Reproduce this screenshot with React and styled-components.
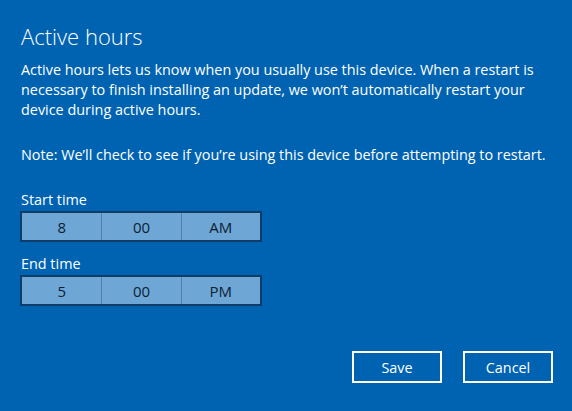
import React from 'react';
import styled, { createGlobalStyle } from 'styled-components';

const GlobalStyle = createGlobalStyle`
  html, body {
    margin: 0;
    padding: 0;
    background: #0063b1;
  }
  body {
    font-family: 'Open Sans', 'Noto Sans', sans-serif;
    color: #ffffff;
  }
`

function TimePicker({ hour, minute, period }) {
  return (
    <Picker>
      <Cell>{hour}</Cell>
      <Cell>{minute}</Cell>
      <Cell>{period}</Cell>
    </Picker>
  )
}

export default function App() {
  return (
    <>
      <GlobalStyle />
      <Dialog>
        <Title>Active hours</Title>
        <Text>
          Active hours lets us know when you usually use this device. When a restart is<br />
          necessary to finish installing an update, we won’t automatically restart your<br />
          device during active hours.
        </Text>
        <Note>Note: We’ll check to see if you’re using this device before attempting to restart.</Note>
        <Field>
          <Label>Start time</Label>
          <TimePicker hour="8" minute="00" period="AM" />
        </Field>
        <Field>
          <Label>End time</Label>
          <TimePicker hour="5" minute="00" period="PM" />
        </Field>
        <Actions>
          <Button>Save</Button>
          <Button>Cancel</Button>
        </Actions>
      </Dialog>
    </>
  )
}

const Dialog = styled.div`
  display: flex;
  flex-direction: column;
  width: 572px;
  height: 411px;
  box-sizing: border-box;
  padding: 22px 10px 0 21px;
  background: #0063b1;
`
const Title = styled.h1`
  margin: 0;
  font-size: 22px;
  font-weight: 300;
  line-height: 28px;
`
const Text = styled.p`
  margin: 10px 0 0 0;
  font-size: 14.4px;
  line-height: 20px;
  white-space: nowrap;
`
const Note = styled(Text)`
  margin-top: 25px;
`
const Field = styled.div`
  display: flex;
  flex-direction: column;
  margin-top: 25px;
  & + & {
    margin-top: 12px;
  }
`
const Label = styled.div`
  font-size: 14.4px;
  line-height: 20px;
  margin-bottom: 1px;
`
const Picker = styled.div`
  display: grid;
  grid-template-columns: 1fr 1fr 1fr;
  width: 242px;
  height: 31px;
  box-sizing: border-box;
  margin-left: -1px;
  border: 2px solid #103d68;
  background: #6ea6d6;
`
const Cell = styled.div`
  display: flex;
  align-items: center;
  justify-content: center;
  color: #0b1f33;
  font-size: 15px;
  & + & {
    border-left: 1px solid #4d82b2;
  }
`
const Actions = styled.div`
  display: flex;
  justify-content: flex-end;
  gap: 21px;
  margin-top: 45px;
  padding-right: 9px;
`
const Button = styled.button`
  width: 90px;
  height: 32px;
  box-sizing: border-box;
  border: 2px solid #ffffff;
  background: transparent;
  color: #ffffff;
  font-family: 'Open Sans', 'Noto Sans', sans-serif;
  font-size: 14.4px;
  padding: 0;
`
